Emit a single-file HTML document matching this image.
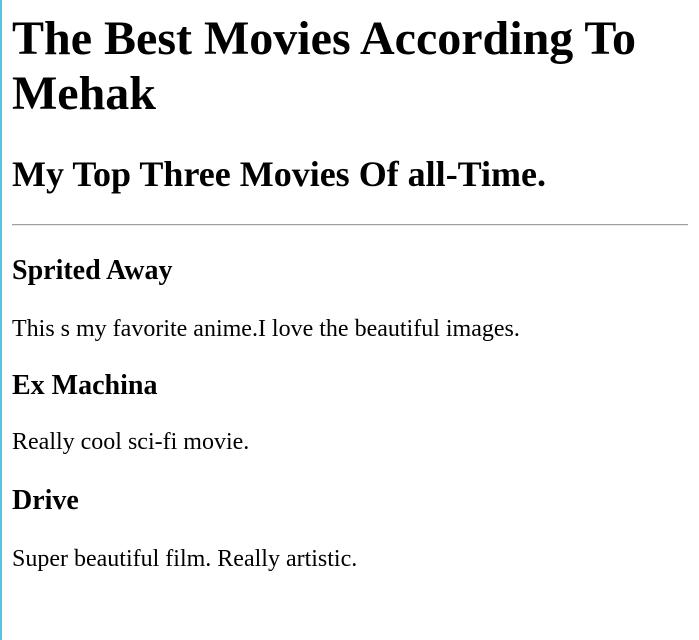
<!DOCTYPE html>
<html><head><meta charset="utf-8"><style>
html,body{margin:0;padding:0;background:#fff;}
body{width:699px;height:640px;position:relative;overflow:hidden;font-family:"Liberation Serif",serif;color:#000;}
.bl{position:absolute;left:0;top:0;width:2px;height:640px;background:#5bc0de;}
.t{position:absolute;left:12px;margin:0;white-space:nowrap;}
h1{font-size:48px;line-height:55px;font-weight:bold;}
h2{font-size:36px;line-height:36px;font-weight:bold;}
h3{font-size:28px;line-height:28px;font-weight:bold;}
p{font-size:24px;line-height:24px;}
.hr{position:absolute;left:12px;width:676px;top:224px;height:1px;background:#a0a0a0;border-bottom:1px solid #e8e8e8;}
</style></head><body>
<div class="bl"></div>
<h1 class="t" style="top:11px">The Best Movies According To<br>Mehak</h1>
<h2 class="t" style="top:156px">My Top Three Movies Of all-Time.</h2>
<div class="hr"></div>
<h3 class="t" style="top:257px">Sprited Away</h3>
<p class="t" style="top:317px">This s my favorite anime.I love the beautiful images.</p>
<h3 class="t" style="top:372px">Ex Machina</h3>
<p class="t" style="top:430px">Really cool sci-fi movie.</p>
<h3 class="t" style="top:487px">Drive</h3>
<p class="t" style="top:547px">Super beautiful film. Really artistic.</p>
</body></html>
